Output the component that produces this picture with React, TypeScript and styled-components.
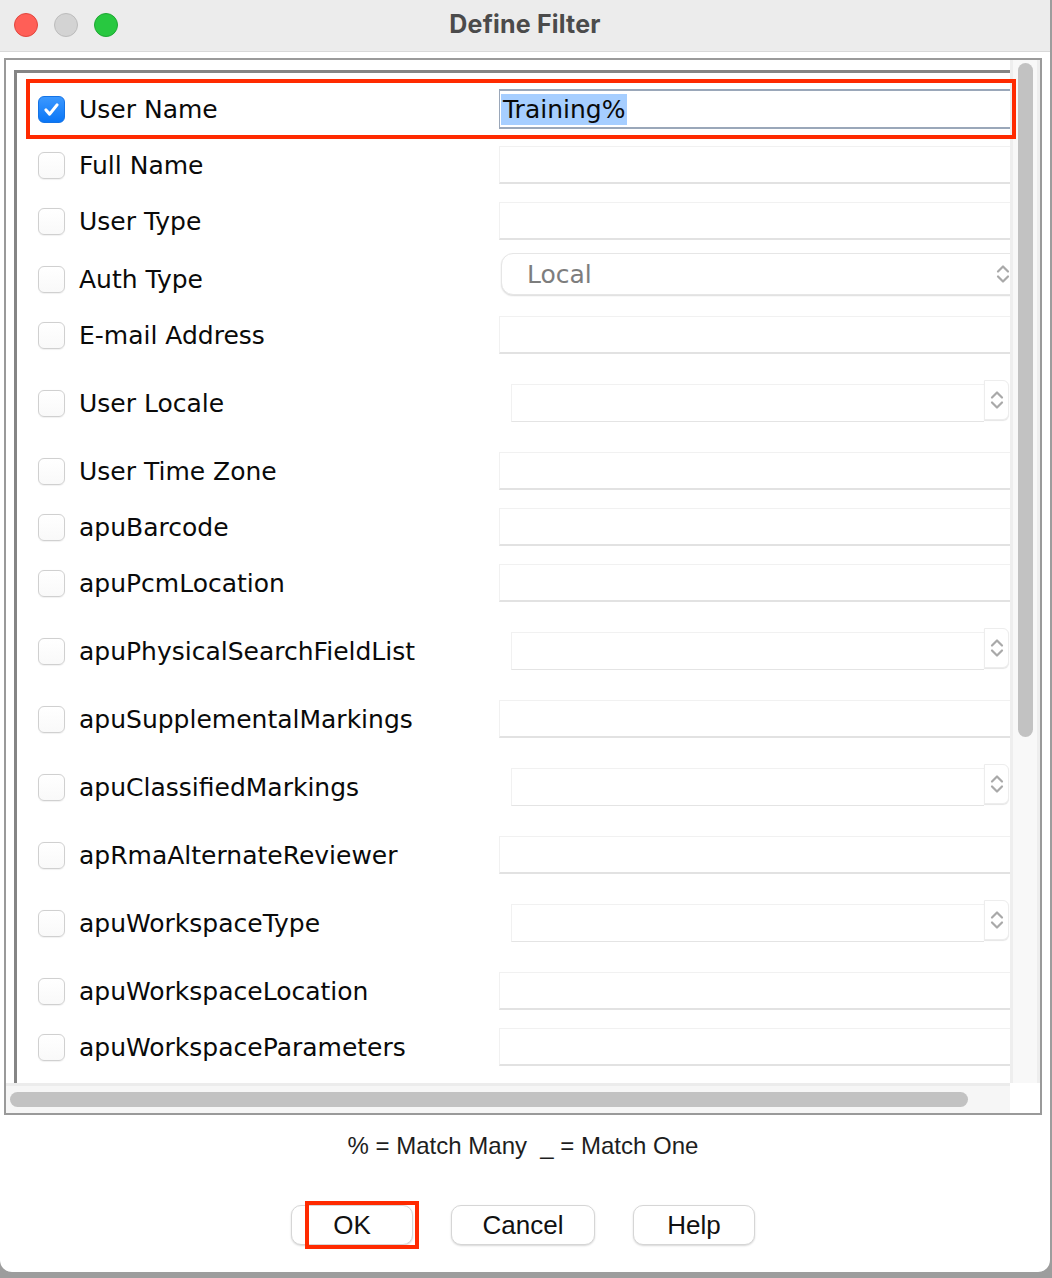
import React from 'react';
import styled, { createGlobalStyle, css } from 'styled-components';

const GlobalStyle = createGlobalStyle`
  html, body { margin: 0; padding: 0; }
  body {
    background: #9d9d9d;
    width: 1052px;
    height: 1278px;
    overflow: hidden;
  }
  #root { width: 1052px; height: 1278px; }
`;

const labelFont = `"DejaVu Sans", "Open Sans", sans-serif`;
const uiFont = `"Liberation Sans", Arial, sans-serif`;

const Window = styled.div`
  width: 1050px;
  height: 1272px;
  background: #ffffff;
  border-radius: 0 0 12px 12px;
  display: flex;
  flex-direction: column;
  overflow: hidden;
`;

const TitleBar = styled.header`
  flex: none;
  height: 52px;
  box-sizing: border-box;
  background: #ececec;
  border-bottom: 1px solid #d8d8d8;
  display: grid;
  grid-template-columns: 1fr auto 1fr;
  align-items: center;
`;

const Lights = styled.div`
  display: flex;
  gap: 16px;
  padding: 0 0 2px 14px;
`;

const Light = styled.span<{ $fill: string; $edge: string }>`
  width: 24px;
  height: 24px;
  box-sizing: border-box;
  border-radius: 50%;
  background: ${(p) => p.$fill};
  border: 1px solid ${(p) => p.$edge};
`;

const Title = styled.h1`
  margin: 0 0 4px;
  font-family: Inter, "Noto Sans", sans-serif;
  font-weight: 700;
  font-size: 25px;
  color: #4b4b4b;
  letter-spacing: 0.2px;
`;

const Body = styled.main`
  flex: 1;
  padding: 6px 8px 0 4px;
  display: flex;
  flex-direction: column;
`;

const Pane = styled.section`
  position: relative;
  width: 1038px;
  height: 1057px;
  box-sizing: border-box;
  border: 2px solid #9a9a9a;
  display: grid;
  grid-template-columns: 1004px 30px;
  grid-template-rows: 1023px 30px;
`;

const Viewport = styled.div`
  overflow: hidden;
  padding: 10px 0 0 8px;
  box-sizing: border-box;
`;

const Sheet = styled.div`
  width: 1050px;
  height: 1060px;
  box-sizing: border-box;
  border-left: 3px solid #858585;
  border-top: 3px solid #858585;
  padding: 16px 0 0 21px;
`;

const Row = styled.div<{ $gap: number }>`
  display: flex;
  align-items: center;
  height: 40px;
  margin-top: ${(p) => p.$gap}px;
`;

const Check = styled.span<{ $on?: boolean }>`
  flex: none;
  width: 27px;
  height: 27px;
  box-sizing: border-box;
  border-radius: 6px;
  margin-right: 14px;
  display: flex;
  align-items: center;
  justify-content: center;
  ${(p) =>
    p.$on
      ? css`
          background: linear-gradient(#3b98ff, #0a76f6);
          border: 1px solid #1473e6;
        `
      : css`
          background: linear-gradient(#ffffff, #f9f9f9);
          border: 1px solid #d0d0d0;
          box-shadow: 0 0.5px 1px rgba(0, 0, 0, 0.06);
        `}
`;

const Label = styled.span`
  flex: none;
  width: 420px;
  font-family: ${labelFont};
  font-size: 25px;
  color: #0a0a0a;
  white-space: nowrap;
`;

const TextField = styled.div`
  flex: none;
  width: 560px;
  height: 38px;
  box-sizing: border-box;
  background: #fff;
  border: 1px solid #f1f1f1;
  border-bottom: 2px solid #e2e2e2;
`;

const FocusField = styled.div`
  flex: none;
  width: 560px;
  height: 40px;
  box-sizing: border-box;
  background: #fff;
  border: 2px solid #9aa7b9;
  border-left-width: 1px;
  padding-left: 1px;
  display: flex;
  align-items: center;
`;

const Selected = styled.span`
  background: #a6ceff;
  font-family: ${labelFont};
  font-size: 25px;
  line-height: 31px;
  color: #0a0a0a;
  padding: 0 2px 0 2px;
`;

const Popup = styled.div`
  flex: none;
  margin: 0 0 10px 2px;
  width: 530px;
  height: 42px;
  box-sizing: border-box;
  border-radius: 12px;
  border: 1px solid #e6e6e6;
  box-shadow: 0 1px 1.5px rgba(0, 0, 0, 0.14);
  background: #fff;
  display: flex;
  align-items: center;
  padding: 0 20px 0 25px;
  font-family: ${labelFont};
  font-size: 25px;
  color: #7d7d7d;
`;

const PopupArrows = styled.span`
  margin-left: auto;
  display: flex;
`;

const Combo = styled.div`
  flex: none;
  margin: 0 0 4px 12px;
  display: flex;
  align-items: flex-start;
  height: 42px;
`;

const ComboField = styled.div`
  width: 473px;
  height: 38px;
  margin-top: 4px;
  box-sizing: border-box;
  background: #fff;
  border: 1px solid #f1f1f1;
  border-bottom: 1px solid #e4e4e4;
  border-right: none;
`;

const ComboSpin = styled.div`
  width: 25px;
  height: 40px;
  box-sizing: border-box;
  background: #fff;
  border: 1px solid #ededed;
  border-radius: 0 6px 6px 0;
  box-shadow: 0 1px 1px rgba(0, 0, 0, 0.1);
  display: flex;
  align-items: center;
  justify-content: center;
`;

const VTrack = styled.div`
  background: #f8f8f8;
  border-left: 3px solid #eeeeee;
  border-right: 3px solid #eeeeee;
  padding: 3px 4px 0 5px;
`;

const VThumb = styled.div`
  width: 15px;
  height: 674px;
  border-radius: 8px;
  background: #c2c2c2;
`;

const HTrack = styled.div`
  background: #f6f6f6;
  border-top: 3px solid #ececec;
  padding: 6px 0 0 4px;
`;

const HThumb = styled.div`
  width: 958px;
  height: 15px;
  border-radius: 8px;
  background: #c2c2c2;
`;

const Corner = styled.div`
  background: #fff;
`;

const Callout = styled.div<{ $l: number; $t: number; $w: number; $h: number }>`
  position: absolute;
  left: ${(p) => p.$l}px;
  top: ${(p) => p.$t}px;
  width: ${(p) => p.$w}px;
  height: ${(p) => p.$h}px;
  box-sizing: border-box;
  border: 4px solid #ff2a00;
  pointer-events: none;
`;

const Hint = styled.p`
  margin: 16px 0 0;
  height: 30px;
  line-height: 30px;
  text-align: center;
  font-family: ${uiFont};
  font-size: 24px;
  color: #1e1e1e;
  white-space: pre;
`;

const Buttons = styled.div`
  margin-top: 44px;
  display: flex;
  justify-content: center;
  gap: 38px;
`;

const ButtonWrap = styled.div`
  position: relative;
`;

const Button = styled.button<{ $w: number }>`
  width: ${(p) => p.$w}px;
  height: 40px;
  box-sizing: border-box;
  border-radius: 10px;
  border: 1px solid #d6d6d6;
  background: #fff;
  box-shadow: 0 1px 2px rgba(0, 0, 0, 0.16);
  font-family: ${uiFont};
  font-size: 26px;
  color: #111;
  padding: 0;
`;

const UpDown = ({ w = 14 }: { w?: number }) => (
  <svg width={w} height="24" viewBox="0 0 14 24" fill="none">
    <path d="M2 9.5 L7 4.5 L12 9.5" stroke="#a9a9a9" strokeWidth="2.2" strokeLinecap="round" strokeLinejoin="round" />
    <path d="M2 14.5 L7 19.5 L12 14.5" stroke="#a9a9a9" strokeWidth="2.2" strokeLinecap="round" strokeLinejoin="round" />
  </svg>
);

const Tick = () => (
  <svg width="27" height="27" viewBox="0 0 27 27" fill="none">
    <path d="M7.5 14 L11.5 18.5 L19.5 8.5" stroke="#fff" strokeWidth="3.4" strokeLinecap="round" strokeLinejoin="round" />
  </svg>
);

type Kind = 'focus' | 'text' | 'popup' | 'combo';
type Item = { label: string; kind: Kind; gap: number; checked?: boolean };

const items: Item[] = [
  { label: 'User Name', kind: 'focus', gap: 0, checked: true },
  { label: 'Full Name', kind: 'text', gap: 16 },
  { label: 'User Type', kind: 'text', gap: 16 },
  { label: 'Auth Type', kind: 'popup', gap: 18 },
  { label: 'E-mail Address', kind: 'text', gap: 16 },
  { label: 'User Locale', kind: 'combo', gap: 28 },
  { label: 'User Time Zone', kind: 'text', gap: 28 },
  { label: 'apuBarcode', kind: 'text', gap: 16 },
  { label: 'apuPcmLocation', kind: 'text', gap: 16 },
  { label: 'apuPhysicalSearchFieldList', kind: 'combo', gap: 28 },
  { label: 'apuSupplementalMarkings', kind: 'text', gap: 28 },
  { label: 'apuClassifiedMarkings', kind: 'combo', gap: 28 },
  { label: 'apRmaAlternateReviewer', kind: 'text', gap: 28 },
  { label: 'apuWorkspaceType', kind: 'combo', gap: 28 },
  { label: 'apuWorkspaceLocation', kind: 'text', gap: 28 },
  { label: 'apuWorkspaceParameters', kind: 'text', gap: 16 },
];

const Control = ({ kind }: { kind: Kind }) => {
  if (kind === 'focus')
    return (
      <FocusField>
        <Selected>Training%</Selected>
      </FocusField>
    );
  if (kind === 'popup')
    return (
      <Popup>
        Local
        <PopupArrows>
          <UpDown />
        </PopupArrows>
      </Popup>
    );
  if (kind === 'combo')
    return (
      <Combo>
        <ComboField />
        <ComboSpin>
          <UpDown />
        </ComboSpin>
      </Combo>
    );
  return <TextField />;
};

export default function App() {
  return (
    <>
      <GlobalStyle />
      <Window>
        <TitleBar>
          <Lights>
            <Light $fill="#ff5f57" $edge="#e1463e" />
            <Light $fill="#d3d3d3" $edge="#bcbcbc" />
            <Light $fill="#28c840" $edge="#1ea733" />
          </Lights>
          <Title>Define Filter</Title>
          <span />
        </TitleBar>
        <Body>
          <Pane>
            <Viewport>
              <Sheet>
                {items.map((it) => (
                  <Row key={it.label} $gap={it.gap}>
                    <Check $on={it.checked}>{it.checked && <Tick />}</Check>
                    <Label>{it.label}</Label>
                    <Control kind={it.kind} />
                  </Row>
                ))}
              </Sheet>
            </Viewport>
            <VTrack>
              <VThumb />
            </VTrack>
            <HTrack>
              <HThumb />
            </HTrack>
            <Corner />
            <Callout $l={20} $t={19} $w={990} $h={60} />
          </Pane>
          <Hint>{'% = Match Many  _ = Match One'}</Hint>
          <Buttons>
            <ButtonWrap>
              <Button $w={122}>OK</Button>
              <Callout $l={14} $t={-4} $w={114} $h={48} />
            </ButtonWrap>
            <Button $w={144}>Cancel</Button>
            <Button $w={122}>Help</Button>
          </Buttons>
        </Body>
      </Window>
    </>
  );
}
